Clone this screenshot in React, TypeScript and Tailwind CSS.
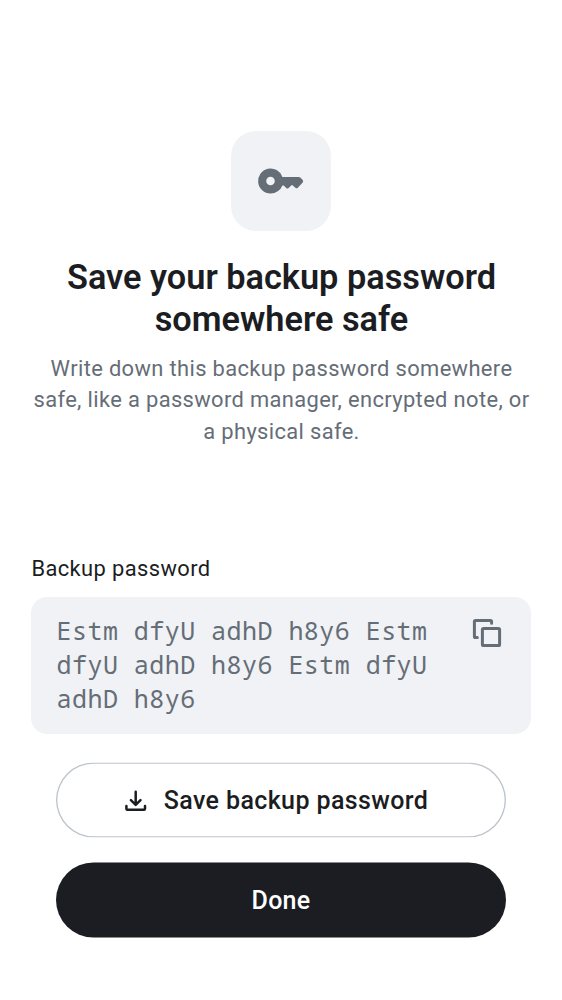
export default function App() {
  return (
    <main className="flex h-[1000px] w-[562px] flex-col bg-white px-[31px] pt-[131px] font-['Roboto',sans-serif] text-[#1b1d22]">
      <header className="flex flex-col items-center text-center">
        <div className="flex h-[100px] w-[100px] items-center justify-center rounded-[25px] bg-[#f0f2f5]">
          <svg className="h-[50px] w-[50px]" viewBox="0 0 50 50" fill="#656d77">
            <path fillRule="evenodd" d="M14.5 37.5a12.5 12.5 0 1 1 11.9-16.6H42.8q.9 0 1.5.6l2.4 2.5q1 1.2 0 2.4l-4.9 5.3q-1.2 1.2-2.4.1l-2.6-2.4q-.8-.7-1.6 0l-2.6 2.6q-1.2 1.1-2.4 0l-2.4-2.6h-1.4A12.5 12.5 0 0 1 14.5 37.5Zm0-8.2a4.3 4.3 0 1 0 0-8.6 4.3 4.3 0 0 0 0 8.6Z" />
          </svg>
        </div>
        <h1 className="mt-[25px] pl-px text-[34.3px] leading-[42px] font-semibold whitespace-nowrap">
          Save your backup password
          <br />
          somewhere safe
        </h1>
        <p className="mt-[13px] pl-px text-[21.9px] leading-[31.25px] tracking-[0.36px] whitespace-nowrap text-[#656d77]">
          Write down this backup password somewhere
          <br />
          safe, like a password manager, encrypted note, or
          <br />a physical safe.
        </p>
      </header>
      <section className="mt-[106.25px]">
        <h2 className="pl-[0.4px] text-[21.9px] leading-[31px] tracking-[0.4px]">Backup password</h2>
        <div className="mt-[13px] flex h-[137px] justify-between rounded-[16px] bg-[#f0f2f5] pt-[16px] pr-[29px] pl-[25.5px]">
          <p className="font-['Noto_Sans_Mono',monospace] text-[25px] leading-[34.2px] tracking-[0.46px] whitespace-nowrap text-[#656d77]">
            Estm dfyU adhD h8y6 Estm
            <br />
            dfyU adhD h8y6 Estm dfyU
            <br />
            adhD h8y6
          </p>
          <svg className="mt-[5px] h-[30px] w-[30px]" viewBox="0 0 30 30" fill="none" stroke="#656d77" strokeWidth="3" strokeLinecap="round" strokeLinejoin="round">
            <rect x="10.4" y="10.4" width="17.2" height="17.2" rx="1.2" />
            <path d="M5.3 19.6H3.6q-1.2 0-1.2-1.2V3.6q0-1.2 1.2-1.2h14.8q1.2 0 1.2 1.2v1.7" />
          </svg>
        </div>
      </section>
      <div className="mt-[29px] flex flex-col gap-[25px] px-[25px]">
        <button className="flex h-[75px] -translate-y-[0.5px] items-center justify-center gap-4 rounded-full pr-[10px] text-[25px] font-medium tracking-[0.39px] shadow-[inset_0_0_0_1.35px_#bdc4cc]">
          <svg className="h-6 w-6" viewBox="0 0 24 24" fill="none" stroke="currentColor" strokeWidth="2.5" strokeLinecap="round" strokeLinejoin="round">
            <path d="M11.7 3.2v12.4M6.9 11.6l4.8 4.8 4.8-4.8M2.4 17.6v2.7q0 1 1 1h16.6q1 0 1-1v-2.7" />
          </svg>
          Save backup password
        </button>
        <button className="h-[75px] -translate-y-[0.5px] rounded-full bg-[#1b1d22] text-[25px] font-medium tracking-[0.25px] text-white">Done</button>
      </div>
    </main>
  );
}
